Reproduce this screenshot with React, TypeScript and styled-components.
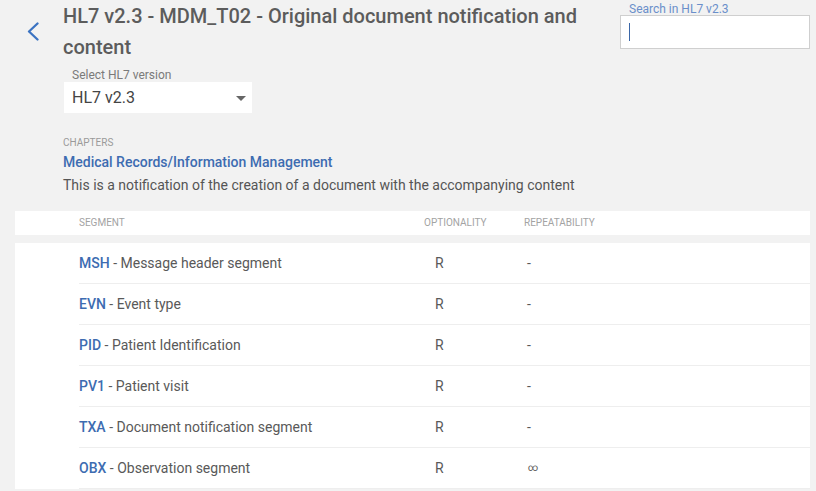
import React from "react";
import styled, { createGlobalStyle } from "styled-components";

const GlobalStyle = createGlobalStyle`
  html, body {
    margin: 0;
    padding: 0;
    background: #f2f2f2;
    font-family: Roboto, "Liberation Sans", Arial, sans-serif;
  }
`;

const Page = styled.div`
  padding: 0 6px 0 15px;
  background: #f2f2f2;
  min-height: 491px;
  box-sizing: border-box;
`;

const Header = styled.div`
  display: flex;
  align-items: flex-start;
`;

const BackCol = styled.div`
  width: 48px;
  flex: none;
  padding: 22px 0 0 12px;
  box-sizing: border-box;
`;

const BackButton = styled.button`
  display: block;
  padding: 0;
  margin: 0;
  border: none;
  background: transparent;
  cursor: pointer;
  width: 14px;
  height: 20px;
`;

const TitleCol = styled.div`
  width: 545px;
  flex: none;
`;

const Title = styled.h1`
  margin: 0;
  padding-top: 1px;
  font-size: 20px;
  line-height: 31px;
  font-weight: 500;
  color: #5c5c5c;
`;

const SelectBlock = styled.div`
  margin: 5px 0 0 1px;
  width: 188px;
`;

const FieldLabel = styled.div<{ $blue?: boolean }>`
  font-size: 12px;
  line-height: 14px;
  color: ${(p) => (p.$blue ? "#6a8fca" : "#7a7a7a")};
  padding-left: ${(p) => (p.$blue ? "9px" : "8px")};
`;

const SelectBox = styled.div`
  height: 31px;
  background: #fff;
  display: flex;
  align-items: center;
  justify-content: space-between;
  padding: 0 6px 0 8px;
  box-sizing: border-box;
  font-size: 16px;
  line-height: 31px;
  color: #444;
`;

const Arrow = styled.span`
  width: 0;
  height: 0;
  border-left: 5px solid transparent;
  border-right: 5px solid transparent;
  border-top: 5px solid #666;
  margin-top: 1px;
`;

const Spacer = styled.div`
  flex: 1;
`;

const SearchCol = styled.div`
  width: 190px;
  flex: none;
  padding-top: 2px;
`;

const SearchBox = styled.div`
  height: 34px;
  margin-top: -1px;
  background: #fff;
  border: 1px solid #cfcfcf;
  box-sizing: border-box;
  display: flex;
  align-items: center;
  padding-left: 8px;
`;

const Caret = styled.span`
  width: 1px;
  height: 18px;
  background: #3b67a8;
`;

const Chapters = styled.div`
  padding: 23px 0 0 48px;
`;

const SmallCaps = styled.div`
  font-size: 10px;
  line-height: 14px;
  color: #9a9a9a;
  text-transform: uppercase;
`;

const ChapterLink = styled.a`
  display: block;
  font-size: 14px;
  line-height: 24px;
  color: #3d6cb1;
  text-decoration: none;
  font-weight: 500;
`;

const Description = styled.p`
  margin: 0;
  font-size: 14px;
  line-height: 23px;
  color: #555;
`;

const TableHead = styled.div`
  margin-top: 14px;
  background: #fff;
  height: 24px;
  display: grid;
  grid-template-columns: 345px 100px 1fr;
  padding-left: 64px;
  align-items: center;
`;

const HeadCell = styled.div`
  font-size: 10px;
  line-height: 24px;
  color: #a3a3a3;
  text-transform: uppercase;
`;

const TableBody = styled.div`
  margin-top: 8px;
  background: #fff;
  padding-left: 64px;
`;

const Row = styled.div`
  display: grid;
  grid-template-columns: 345px 100px 1fr;
  height: 41px;
  box-sizing: border-box;
  border-bottom: 1px solid #eeeeee;
  align-items: center;
  font-size: 14px;
  line-height: 40px;
  color: #595959;
`;

const Code = styled.span`
  color: #3d6cb1;
  font-weight: 500;
`;

const Opt = styled.div`
  padding-left: 11px;
`;

const Rep = styled.div<{ $inf?: boolean }>`
  padding-left: ${(p) => (p.$inf ? "4px" : "3px")};
  font-size: ${(p) => (p.$inf ? "10px" : "14px")};
`;

const segments = [
  { code: "MSH", name: "Message header segment", opt: "R", rep: "-" },
  { code: "EVN", name: "Event type", opt: "R", rep: "-" },
  { code: "PID", name: "Patient Identification", opt: "R", rep: "-" },
  { code: "PV1", name: "Patient visit", opt: "R", rep: "-" },
  { code: "TXA", name: "Document notification segment", opt: "R", rep: "-" },
  { code: "OBX", name: "Observation segment", opt: "R", rep: "∞" },
];

export default function App() {
  return (
    <>
      <GlobalStyle />
      <Page>
        <Header>
          <BackCol>
            <BackButton aria-label="Back">
              <svg width="14" height="20" viewBox="0 0 14 20">
                <polyline
                  points="10.5,1.5 2,9.5 10.5,17.5"
                  fill="none"
                  stroke="#3b73c2"
                  strokeWidth="2.3"
                  strokeLinecap="round"
                  strokeLinejoin="round"
                />
              </svg>
            </BackButton>
          </BackCol>
          <TitleCol>
            <Title>HL7 v2.3 - MDM_T02 - Original document notification and content</Title>
            <SelectBlock>
              <FieldLabel>Select HL7 version</FieldLabel>
              <SelectBox>
                <span>HL7 v2.3</span>
                <Arrow />
              </SelectBox>
            </SelectBlock>
          </TitleCol>
          <Spacer />
          <SearchCol>
            <FieldLabel $blue>Search in HL7 v2.3</FieldLabel>
            <SearchBox>
              <Caret />
            </SearchBox>
          </SearchCol>
        </Header>
        <Chapters>
          <SmallCaps>Chapters</SmallCaps>
          <ChapterLink href="#">Medical Records/Information Management</ChapterLink>
          <Description>
            This is a notification of the creation of a document with the accompanying content
          </Description>
        </Chapters>
        <TableHead>
          <HeadCell>Segment</HeadCell>
          <HeadCell>Optionality</HeadCell>
          <HeadCell>Repeatability</HeadCell>
        </TableHead>
        <TableBody>
          {segments.map((s) => (
            <Row key={s.code}>
              <div>
                <Code>{s.code}</Code> - {s.name}
              </div>
              <Opt>{s.opt}</Opt>
              <Rep $inf={s.rep === "∞"}>{s.rep}</Rep>
            </Row>
          ))}
        </TableBody>
      </Page>
    </>
  );
}
